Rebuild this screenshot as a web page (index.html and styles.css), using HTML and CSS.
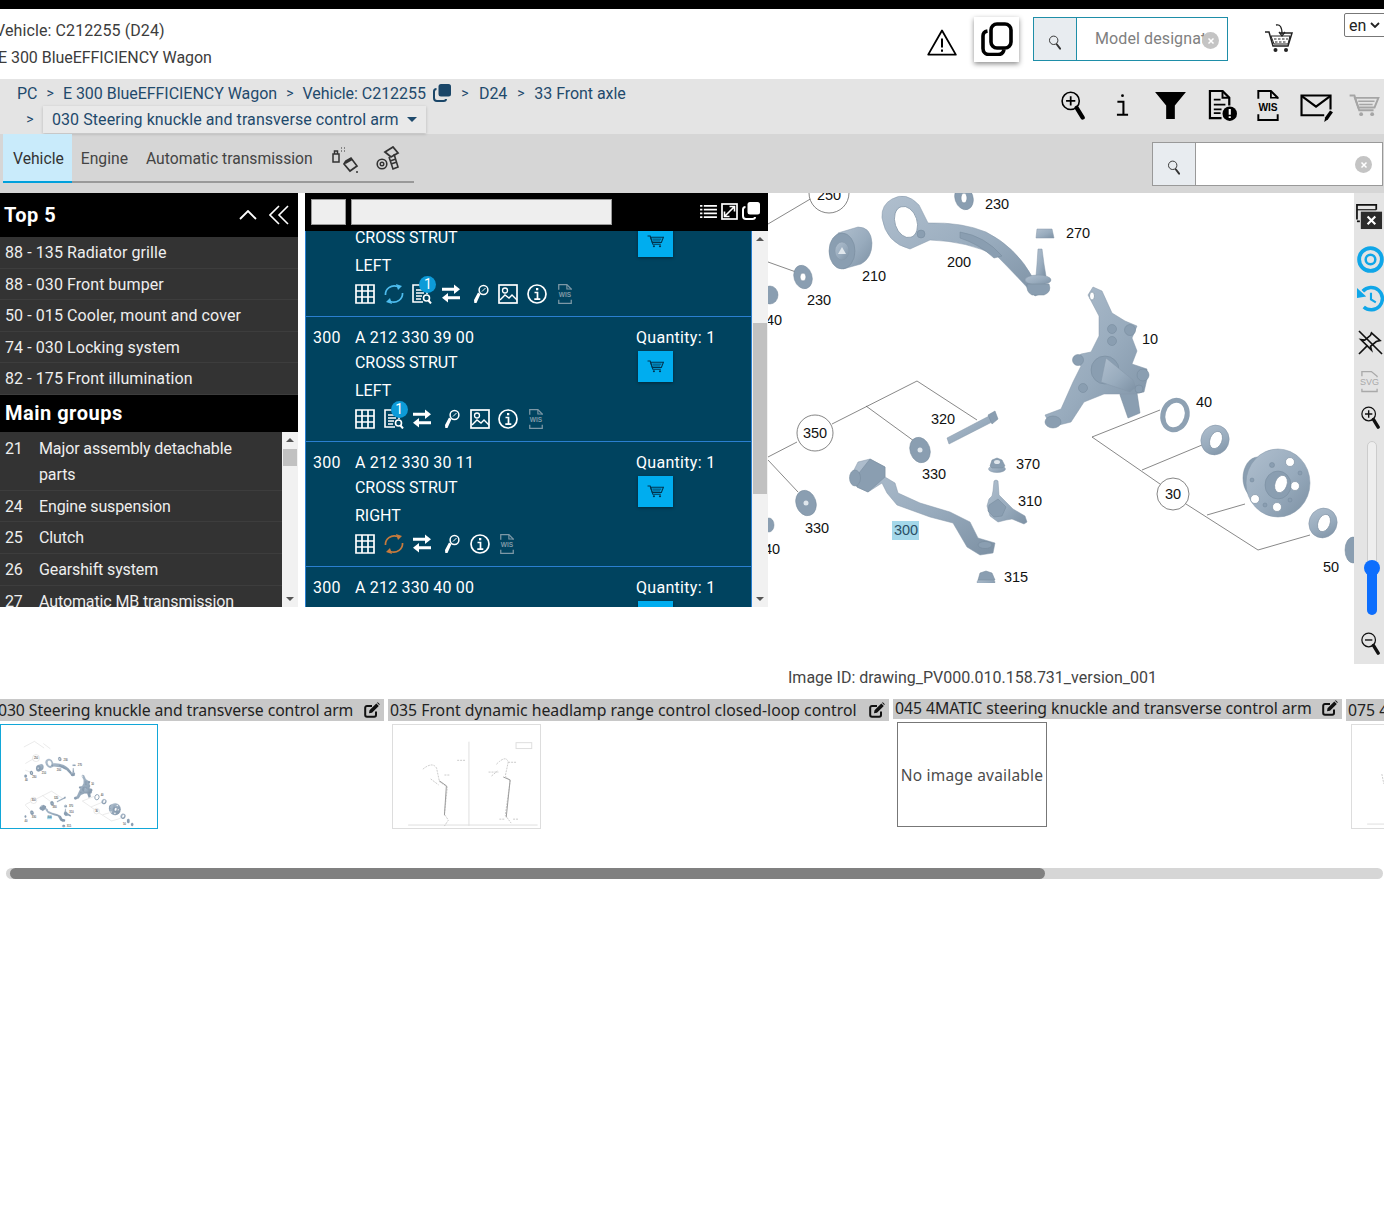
FILE: index.html
```html
<!DOCTYPE html>
<html lang="en">
<head>
<meta charset="utf-8">
<title>E 300 BlueEFFICIENCY Wagon - 030 Steering knuckle and transverse control arm</title>
<link rel="stylesheet" href="styles.css">
</head>
<body>
<svg class="defs" xmlns="http://www.w3.org/2000/svg">
  <symbol id="i-warning" viewBox="0 0 30 27"><path d="M15 1.500 28.800 25.600H1.200Z" fill="#fff" stroke="currentColor" stroke-width="1.800" stroke-linejoin="round"/><path d="M15 9.500v9" stroke="currentColor" stroke-width="2"/><path d="M15 20.500v2.200" stroke="currentColor" stroke-width="2"/></symbol>
  <symbol id="i-copy" viewBox="0 0 32 34"><rect x="10" y="2" width="20" height="24" rx="6" fill="none" stroke="currentColor" stroke-width="3.600"/><path d="M6.500 9C3.500 9.500 2 11 2 14v12.500C2 30 4.500 32.500 8 32.500h9c3.500 0 5.500-2 6-5" fill="none" stroke="currentColor" stroke-width="3.600"/></symbol>
  <symbol id="i-search" viewBox="0 0 16 18"><circle cx="6.500" cy="6.500" r="4.800" fill="none" stroke="currentColor" stroke-width="1.100"/><path d="m10 11 3.800 5" stroke="currentColor" stroke-width="2.200" stroke-linecap="round"/></symbol>
  <symbol id="i-basket" viewBox="0 0 30 30"><path d="M1 9h4l4 14h15l4-13H16" fill="none" stroke="currentColor" stroke-width="1.500"/><path d="M7 13h19l-2 8H10Z" fill="none" stroke="currentColor" stroke-width="1"/><path d="M10 16h14M11 19h12" stroke="currentColor" stroke-width="1.200" stroke-dasharray="2.500 1.500"/><path d="M12 2c4-1 6 2 6 9" fill="none" stroke="currentColor" stroke-width="1.300"/><path d="m15 9 3 4 3-4" fill="none" stroke="currentColor" stroke-width="1.300"/><circle cx="11.500" cy="27" r="2" fill="currentColor"/><circle cx="22" cy="27" r="2" fill="currentColor"/></symbol>
  <symbol id="i-zoomin" viewBox="0 0 26 32"><circle cx="10.500" cy="10.500" r="9.300" fill="none" stroke="currentColor" stroke-width="1.700"/><path d="M10.500 5.500v10M5.500 10.500h10" stroke="currentColor" stroke-width="1.900"/><path d="m17 18 6.500 10.500" stroke="currentColor" stroke-width="4.600" stroke-linecap="round"/></symbol>
  <symbol id="i-zoomout" viewBox="0 0 26 32"><circle cx="10.500" cy="10.500" r="9.300" fill="none" stroke="currentColor" stroke-width="1.700"/><path d="M5.500 10.500h10" stroke="currentColor" stroke-width="1.900"/><path d="m17 18 6.500 10.500" stroke="currentColor" stroke-width="4.600" stroke-linecap="round"/></symbol>
  <symbol id="i-info" viewBox="0 0 14 24"><rect x="5.500" y="0.500" width="3" height="3" rx="1.500" fill="currentColor"/><path d="M1.500 8.500H8v13M1 22.500h12" fill="none" stroke="currentColor" stroke-width="2.200"/></symbol>
  <symbol id="i-funnel" viewBox="0 0 32 28"><path d="M0 0h32L20.500 14v14h-9V14Z" fill="currentColor"/></symbol>
  <symbol id="i-docalert" viewBox="0 0 30 32"><path d="M14 29H2V1h13l7 7v8" fill="none" stroke="currentColor" stroke-width="2.300"/><path d="M15 1v7h7" fill="none" stroke="currentColor" stroke-width="2"/><path d="M6 10h7M6 15h12M6 20h8M6 24h7" stroke="currentColor" stroke-width="1.800"/><circle cx="22.500" cy="24.500" r="7.500" fill="currentColor"/><path d="M22.500 19.500v6M22.500 27v2" stroke="#fff" stroke-width="2.200"/></symbol>
  <symbol id="i-wis" viewBox="0 0 24 32"><path d="M2 9V1h13l7 7v1M2 25v6h20v-6" fill="none" stroke="currentColor" stroke-width="2"/><path d="M15 1v7h7" fill="none" stroke="currentColor" stroke-width="1.800"/><text class="wis-t" x="12" y="21.500">WIS</text></symbol>
  <symbol id="i-mail" viewBox="0 0 34 30"><path d="M25 22H1.500V1.500h30V16" fill="none" stroke="currentColor" stroke-width="2.200"/><path d="m1.500 2 15 11 15-11" fill="none" stroke="currentColor" stroke-width="2.200"/><path d="M25 29l1-5 5-7 3 2-5 7Z" fill="currentColor"/></symbol>
  <symbol id="i-cart" viewBox="0 0 32 24"><path d="M1 1.500h5l5 15.500h15" fill="none" stroke="currentColor" stroke-width="2"/><path d="M6.500 4h24.500l-4 10H10Z" fill="none" stroke="currentColor" stroke-width="2"/><path d="M10 7.500h17M11 11h14" stroke="currentColor" stroke-width="1.600"/><circle cx="13" cy="21" r="2" fill="currentColor"/><circle cx="24.500" cy="21" r="2" fill="currentColor"/></symbol>
  <symbol id="i-stack" viewBox="0 0 18 18"><rect x="5.500" y="0" width="12.500" height="12.500" rx="2.500" fill="currentColor"/><path d="M3.500 5C1.500 5 1 6 1 7.500V14c0 2 1 3 3 3h6.500c1.500 0 2.500-.5 2.500-2" fill="none" stroke="currentColor" stroke-width="2"/></symbol>
  <symbol id="i-bottle" viewBox="0 0 28 28"><path d="M2 8h6v8H2ZM3.500 8V5h3v3" fill="none" stroke="currentColor" stroke-width="1.500"/><path d="M10 2h1M13 2h1M10 5h1M13 5h1" stroke="currentColor" stroke-width="1.200"/><path d="m15 15 5-3 6 8-7 5-6-7Z" fill="none" stroke="currentColor" stroke-width="1.700"/><path d="m14 17 7-4" stroke="currentColor" stroke-width="2.500"/><circle cx="26" cy="26" r="1" fill="currentColor"/></symbol>
  <symbol id="i-bolt" viewBox="0 0 26 26"><path d="m9 6 8-5 5 6-7 4Z" fill="none" stroke="currentColor" stroke-width="1.800"/><path d="m13 11 4 12 5-2-4-13M14 15l6-2M15 18l6-2" fill="none" stroke="currentColor" stroke-width="1.600"/><circle cx="6" cy="18" r="4.800" fill="none" stroke="currentColor" stroke-width="1.600"/><circle cx="6" cy="18" r="1.800" fill="none" stroke="currentColor" stroke-width="1.400"/></symbol>
  <symbol id="i-list" viewBox="0 0 18 16"><path d="M0 2h2.500M0 6h2.500M0 10h2.500M0 14h2.500M4 2h14M4 6h14M4 10h14M4 14h14" stroke="currentColor" stroke-width="2"/></symbol>
  <symbol id="i-expand" viewBox="0 0 17 17"><rect x="1" y="1" width="15" height="15" fill="none" stroke="currentColor" stroke-width="1.700"/><path d="m4 13 9-9M8.500 3.500h5v5M3.500 8.500v5h5" fill="none" stroke="currentColor" stroke-width="1.600"/></symbol>
  <symbol id="i-grid" viewBox="0 0 20 20"><path d="M1 1h18v18H1ZM1 7h18M1 13h18M7 1v18M13 1v18" fill="none" stroke="currentColor" stroke-width="1.700"/></symbol>
  <symbol id="i-refresh" viewBox="0 0 20 20"><path d="M1.500 11C1 5 7 0 14 2.500" fill="none" stroke="currentColor" stroke-width="1.700"/><path d="M12 0l6 2-4 4Z" fill="currentColor"/><path d="M18.500 9c.5 6-5.500 11-12.500 8.500" fill="none" stroke="currentColor" stroke-width="1.700"/><path d="M8 20 2 18l4-4Z" fill="currentColor"/></symbol>
  <symbol id="i-docsearch" viewBox="0 0 20 20"><path d="M11 18H1V1h9l5 5v4" fill="none" stroke="currentColor" stroke-width="1.600"/><path d="M4 6h6M4 9h8M4 12h6M4 15h5" stroke="currentColor" stroke-width="1.300"/><circle cx="14.500" cy="14" r="3" fill="none" stroke="currentColor" stroke-width="1.600"/><path d="m16.500 16.500 2.500 3" stroke="currentColor" stroke-width="2"/></symbol>
  <symbol id="i-swap" viewBox="0 0 20 20"><path d="M1 3.800h12V.5l6 4.800-6 4.800V6.800H1Z" fill="currentColor"/><path d="M19 12.200H7V9L1 13.800l6 4.800v-3.400h12Z" fill="currentColor"/></symbol>
  <symbol id="i-key" viewBox="0 0 20 20"><circle cx="13.500" cy="6" r="4.400" fill="none" stroke="currentColor" stroke-width="1.500"/><path d="M15.500 4 12 7.500" stroke="currentColor" stroke-width="1"/><path d="M10.500 10 6.500 19H4.300L4 16l4-7.500Z" fill="currentColor"/></symbol>
  <symbol id="i-image" viewBox="0 0 20 20"><rect x="1" y="1" width="18" height="18" fill="none" stroke="currentColor" stroke-width="1.700"/><circle cx="7" cy="6.500" r="2.500" fill="none" stroke="currentColor" stroke-width="1.300"/><path d="m2 16 5-5 4 3 3-3 5 5" fill="none" stroke="currentColor" stroke-width="1.400"/></symbol>
  <symbol id="i-infoc" viewBox="0 0 20 20"><circle cx="10" cy="10" r="9" fill="none" stroke="currentColor" stroke-width="1.700"/><rect x="9" y="4" width="2.300" height="2.300" fill="currentColor"/><path d="M7.500 8.500h3v6.500M7.300 15.200h6" fill="none" stroke="currentColor" stroke-width="1.700"/></symbol>
  <symbol id="i-edit" viewBox="0 0 16 16"><path d="M12 9.500V13a1.800 1.800 0 0 1-1.800 1.800H3A1.800 1.800 0 0 1 1.200 13V5.800A1.800 1.800 0 0 1 3 4h5" fill="none" stroke="currentColor" stroke-width="2"/><path d="m5.500 8.200 6.800-6.800 2.500 2.500L8 10.700l-3 .5ZM13 .8l.8-.6 2 2-.6.800Z" fill="currentColor"/></symbol>
  <symbol id="i-winx" viewBox="0 0 28 28"><path d="M1 17V2h20v5" fill="none" stroke="currentColor" stroke-width="1.800"/><path d="M1 7h20" stroke="currentColor" stroke-width="1.200"/><path d="M4 19H1" stroke="currentColor" stroke-width="1.800"/><rect x="5" y="9" width="22" height="18" fill="#2b2b2b"/><path d="m12 14 8 8M20 14l-8 8" stroke="#fff" stroke-width="2.200"/></symbol>
  <symbol id="i-target" viewBox="0 0 28 28"><circle cx="14" cy="14" r="11.800" fill="none" stroke="currentColor" stroke-width="4"/><circle cx="14" cy="14" r="5" fill="none" stroke="currentColor" stroke-width="2.600"/></symbol>
  <symbol id="i-history" viewBox="0 0 28 28"><path d="M6 6.500A11.600 11.600 0 1 1 7 22.800" fill="none" stroke="currentColor" stroke-width="3.600"/><path d="M0 3 9.500 12 0 13.500Z" fill="currentColor"/><path d="M14.500 8v7l5 3" fill="none" stroke="currentColor" stroke-width="2.200"/></symbol>
  <symbol id="i-pinoff" viewBox="0 0 26 26"><path d="m1 1 24 24M1 25l9-9" stroke="currentColor" stroke-width="1.700"/><path d="m14 3 9 8-4 1-6 5 1 4-11-11 4 .5 6-5Z" fill="none" stroke="currentColor" stroke-width="1.700"/></symbol>
  <symbol id="i-svgdoc" viewBox="0 0 20 24"><path d="M2 6V1h10l6 5v1M2 19v3h16v-3" fill="none" stroke="currentColor" stroke-width="1.400"/></symbol>
  <symbol id="i-x" viewBox="0 0 10 10"><path d="m2.500 2.500 5 5M7.500 2.500l-5 5" stroke="currentColor" stroke-width="1.500"/></symbol>
  <symbol id="i-chev" viewBox="0 0 10 6"><path d="m1 1 4 4 4-4" fill="none" stroke="currentColor" stroke-width="1.800"/></symbol>
</svg>

<div class="blackbar"></div>

<header class="head">
  <div class="vehicle">
    <div>Vehicle: C212255 (D24)</div>
    <div class="model">E 300 BlueEFFICIENCY Wagon</div>
  </div>
  <div class="head-tools">
    <svg class="ic-warning"><use href="#i-warning"/></svg>
    <div class="copybox"><svg class="ic-copy"><use href="#i-copy"/></svg></div>
    <div class="searchbox teal">
      <div class="search-btn"><svg class="ic-search"><use href="#i-search"/></svg></div>
      <div class="search-field">
        <span class="placeholder">Model designat</span>
        <span class="clear over"><svg class="ic-x"><use href="#i-x"/></svg></span>
      </div>
    </div>
    <svg class="ic-basket"><use href="#i-basket"/></svg>
    <div class="lang">en<svg class="ic-chev"><use href="#i-chev"/></svg></div>
  </div>
</header>

<nav class="crumbbar">
  <div class="crumbs">
    <div class="crumb-line">
      <span>PC</span><i>&gt;</i><span>E 300 BlueEFFICIENCY Wagon</span><i>&gt;</i><span>Vehicle: C212255</span><svg class="ic-stack"><use href="#i-stack"/></svg><i class="after-ic">&gt;</i><span>D24</span><i class="last">&gt;</i><span>33 Front axle</span>
    </div>
    <div class="crumb-line second">
      <i>&gt;</i>
      <div class="crumb-drop">030 Steering knuckle and transverse control arm<b class="caret"></b></div>
    </div>
  </div>
  <div class="crumb-tools">
    <svg class="t-zoom"><use href="#i-zoomin"/></svg>
    <svg class="t-info"><use href="#i-info"/></svg>
    <svg class="t-funnel"><use href="#i-funnel"/></svg>
    <svg class="t-doc"><use href="#i-docalert"/></svg>
    <svg class="t-wis"><use href="#i-wis"/></svg>
    <svg class="t-mail"><use href="#i-mail"/></svg>
    <svg class="t-cart"><use href="#i-cart"/></svg>
  </div>
</nav>

<div class="tabbar">
  <div class="tabs">
    <div class="tab active">Vehicle</div>
    <div class="tab">Engine</div>
    <div class="tab">Automatic transmission</div>
    <svg class="tab-ic"><use href="#i-bottle"/></svg>
    <svg class="tab-ic second"><use href="#i-bolt"/></svg>
  </div>
  <div class="searchbox grey">
    <div class="search-btn"><svg class="ic-search"><use href="#i-search"/></svg></div>
    <div class="search-field">
      <span class="clear"><svg class="ic-x"><use href="#i-x"/></svg></span>
    </div>
  </div>
</div>

<main class="work">
  <aside class="nav-panel">
    <div class="panel-head top5">
      <h2>Top 5</h2>
      <svg class="ph-up" viewBox="0 0 18 10"><path d="m1 9 8-8 8 8" fill="none" stroke="currentColor" stroke-width="1.800"/></svg>
      <svg class="ph-dbl" viewBox="0 0 20 20"><path d="M10 1 1 10l9 9M19 1l-9 9 9 9" fill="none" stroke="currentColor" stroke-width="1.600"/></svg>
    </div>
    <ul class="top-list">
      <li>88 - 135 Radiator grille</li>
      <li>88 - 030 Front bumper</li>
      <li>50 - 015 Cooler, mount and cover</li>
      <li>74 - 030 Locking system</li>
      <li>82 - 175 Front illumination</li>
    </ul>
    <div class="panel-head groups"><h2>Main groups</h2></div>
    <div class="group-wrap">
      <ul class="group-list">
        <li><span>21</span><span>Major assembly detachable parts</span></li>
        <li><span>24</span><span>Engine suspension</span></li>
        <li><span>25</span><span>Clutch</span></li>
        <li><span>26</span><span>Gearshift system</span></li>
        <li><span>27</span><span>Automatic MB transmission</span></li>
      </ul>
      <div class="vscroll"><b class="up"></b><div class="track"><div class="thumb t-left"></div></div><b class="down"></b></div>
    </div>
  </aside>

  <section class="parts-panel">
    <div class="parts-head">
      <div class="fake-input small"></div>
      <div class="fake-input wide"></div>
      <div class="parts-head-ic">
        <svg class="ph-list"><use href="#i-list"/></svg>
        <svg class="ph-exp"><use href="#i-expand"/></svg>
        <svg class="ph-stack"><use href="#i-stack"/></svg>
      </div>
    </div>
    <div class="parts-body">
      <div class="parts-list">
        <article class="part first">
          <div class="num"></div>
          <div class="desc">
            <div>&nbsp;</div><div>CROSS STRUT</div><div>LEFT</div>
            <div class="part-ic">
              <svg><use href="#i-grid"/></svg>
              <svg class="blue"><use href="#i-refresh"/></svg>
              <span class="doc"><svg><use href="#i-docsearch"/></svg><em>1</em></span>
              <svg><use href="#i-swap"/></svg>
              <svg><use href="#i-key"/></svg>
              <svg><use href="#i-image"/></svg>
              <svg><use href="#i-infoc"/></svg>
              <svg class="dim"><use href="#i-wis"/></svg>
            </div>
          </div>
          <div class="qty"><div>&nbsp;</div><div class="buy"><svg><use href="#i-cart"/></svg></div></div>
        </article>
        <article class="part">
          <div class="num">300</div>
          <div class="desc">
            <div>A 212 330 39 00</div><div>CROSS STRUT</div><div>LEFT</div>
            <div class="part-ic">
              <svg><use href="#i-grid"/></svg>
              <span class="doc"><svg><use href="#i-docsearch"/></svg><em>1</em></span>
              <svg><use href="#i-swap"/></svg>
              <svg><use href="#i-key"/></svg>
              <svg><use href="#i-image"/></svg>
              <svg><use href="#i-infoc"/></svg>
              <svg class="dim"><use href="#i-wis"/></svg>
            </div>
          </div>
          <div class="qty"><div>Quantity: 1</div><div class="buy"><svg><use href="#i-cart"/></svg></div></div>
        </article>
        <article class="part">
          <div class="num">300</div>
          <div class="desc">
            <div>A 212 330 30 11</div><div>CROSS STRUT</div><div>RIGHT</div>
            <div class="part-ic">
              <svg><use href="#i-grid"/></svg>
              <svg class="orange"><use href="#i-refresh"/></svg>
              <svg><use href="#i-swap"/></svg>
              <svg><use href="#i-key"/></svg>
              <svg><use href="#i-infoc"/></svg>
              <svg class="dim"><use href="#i-wis"/></svg>
            </div>
          </div>
          <div class="qty"><div>Quantity: 1</div><div class="buy"><svg><use href="#i-cart"/></svg></div></div>
        </article>
        <article class="part">
          <div class="num">300</div>
          <div class="desc"><div>A 212 330 40 00</div></div>
          <div class="qty"><div>Quantity: 1</div><div class="buy"><svg><use href="#i-cart"/></svg></div></div>
        </article>
      </div>
      <div class="vscroll"><b class="up"></b><div class="track"><div class="thumb t-parts"></div></div><b class="down"></b></div>
    </div>
  </section>

  <section class="viewer">
    <div class="canvas">
      <svg class="drawing" viewBox="768 193 586 390" xmlns="http://www.w3.org/2000/svg">
        <defs>
          <linearGradient id="metal" x1="0" y1="0" x2="1" y2="1">
            <stop offset="0" stop-color="#b0bfce"/><stop offset=".55" stop-color="#98abbd"/><stop offset="1" stop-color="#7c90a3"/>
          </linearGradient>
          <g id="art">
            <g class="leaders">
              <path d="M768 224 812 198M768 262l28 10"/>
              <path d="M768 457l29-15M832 424l85-43 60 39M866 406l48 35M768 460l30 32"/>
              <path d="M1160 410l-68 27 68 47M1142 470l60-25M1186 504l72 46 52-15M1207 515l38-11"/>
              <path d="M760 130l60-32 55 38M870 110l40 30"/>
            </g>
            <circle class="callout" cx="829" cy="193" r="20"/>
            <circle class="callout" cx="815" cy="433" r="18"/>
            <circle class="callout" cx="1173" cy="494" r="16"/>

            <g class="part-art">
              <!-- upper control arm 200 -->
              <path d="M892 199q14-8 27 6l9 18q34-1 58 9 30 15 47 46l15 13-13 5q-20-22-38-40-30-15-67-16l-20 9q-24-6-28-31-1-13 10-19Z"/>
              <ellipse class="hole" cx="906" cy="222" rx="11" ry="16" transform="rotate(-18 906 222)"/>
              <circle class="shade" cx="921" cy="234" r="4"/>
              <path class="shade" d="M960 232q25 4 42 24l-8 2q-15-14-34-20Z"/>
              <path d="M1037 264l1-15 4 0 2 15 2 12h-10Z"/>
              <ellipse cx="1038" cy="280" rx="13" ry="5"/>
              <path class="shade" d="M1027 284h22q3 8-5 11h-12q-6-3-5-11Z"/>
              <path d="M1037 229l15 0 2 9-18 0Z"/>
              <!-- bush 210 -->
              <path d="M838 233 858 227q13 0 14 16 0 15-11 21l-18 5Z"/>
              <ellipse cx="842" cy="251" rx="13" ry="18" class="shade"/>
              <ellipse cx="842" cy="251" rx="7" ry="9"/>
              <path class="hole-dark" d="M842 247l4 7h-8Z"/>
              <!-- washers -->
              <ellipse cx="803" cy="277" rx="9" ry="12" transform="rotate(-18 803 277)" class="shade"/>
              <ellipse class="hole" cx="803" cy="277" rx="3" ry="4"/>
              <ellipse cx="964" cy="198" rx="9" ry="12" transform="rotate(-18 964 198)" class="shade"/>
              <ellipse class="hole" cx="964" cy="198" rx="3" ry="5"/>
              <ellipse cx="770" cy="295" rx="8" ry="9" class="shade"/>
              <!-- knuckle 10 -->
              <path class="shade" d="M1120 392l20-2-3 3 3 20-12 5-8-23Z"/>
              <path d="M1088 295l5-8 9 4 10 22 13 8 12 5-5 12 5 13-5 13 15 5v10l-3 13-10 2-13 0h-17l-20 8-13 20-20 5-6-12 16-6 12-27 8-16-7-7 7-5 10-2 8-16v-20Z"/>
              <ellipse class="hole" cx="1092" cy="296" rx="2.500" ry="4"/>
              <circle class="shade" cx="1112" cy="329" r="4.500"/><circle class="shade" cx="1112" cy="341" r="4.500"/>
              <circle class="shade" cx="1130" cy="330" r="5.500"/><circle class="shade" cx="1143" cy="375" r="6"/>
              <circle class="shade" cx="1083" cy="388" r="4.500"/><circle class="shade" cx="1078" cy="360" r="5.500"/>
              <circle class="shade" cx="1105" cy="370" r="14"/>
              <path d="M1106 358l27 22 3 7-6 5-29-10Z"/>
              <circle class="shade" cx="1139" cy="389" r="4"/>
              <ellipse class="shade" cx="1053" cy="422" rx="8" ry="6"/>
              <!-- ring 40 -->
              <ellipse class="ring" cx="1175" cy="415" rx="12" ry="15" transform="rotate(16 1175 415)"/>
              <!-- bearing -->
              <ellipse cx="1215" cy="440" rx="14" ry="15" transform="rotate(22 1215 440)"/>
              <ellipse class="hole" cx="1216" cy="440" rx="6" ry="9" transform="rotate(22 1216 440)"/>
              <ellipse cx="1323" cy="523" rx="14" ry="15" transform="rotate(22 1323 523)"/>
              <ellipse class="hole" cx="1324" cy="523" rx="6" ry="9" transform="rotate(22 1324 523)"/>
              <!-- hub -->
              <ellipse class="shade" cx="1258" cy="478" rx="15" ry="21"/>
              <ellipse cx="1278" cy="483" rx="32" ry="34"/>
              <circle class="hole" cx="1290" cy="462" r="4.500"/><circle class="hole" cx="1295" cy="486" r="4.500"/>
              <circle class="hole" cx="1255" cy="499" r="4.500"/><circle class="hole" cx="1277" cy="507" r="4.500"/>
              <circle class="shade" cx="1272" cy="465" r="2.500"/><circle class="shade" cx="1300" cy="473" r="2"/><circle class="shade" cx="1252" cy="480" r="2"/><circle class="shade" cx="1265" cy="505" r="2"/><circle class="shade" cx="1290" cy="500" r="2"/>
              <ellipse class="shade" cx="1278" cy="485" rx="13" ry="14"/>
              <ellipse class="hole" cx="1281" cy="484" rx="6" ry="9" transform="rotate(20 1281 484)"/>
              <ellipse class="shade" cx="1353" cy="550" rx="8" ry="13"/>
              <ellipse class="shade" cx="1375" cy="570" rx="7" ry="10"/><ellipse class="shade" cx="1410" cy="600" rx="9" ry="10"/>
              <!-- bolt 320 -->
              <path d="M947 438l44-23 3 6-45 23Z"/>
              <path class="shade" d="M988 415l7-4 3 8-6 5Z"/>
              <!-- washers lower -->
              <ellipse cx="920" cy="450" rx="10" ry="13" transform="rotate(-18 920 450)" class="shade"/>
              <circle class="hole-dark" cx="920" cy="450" r="2.500"/>
              <ellipse cx="806" cy="503" rx="10" ry="13" transform="rotate(-18 806 503)" class="shade"/>
              <circle class="hole-dark" cx="806" cy="503" r="2.500"/>
              <ellipse class="shade" cx="769" cy="525" rx="5" ry="7"/>
              <!-- nut 370 -->
              <ellipse cx="997" cy="469" rx="8.500" ry="3.500"/>
              <path class="shade" d="M990 466l2-6 5-2 5 2 3 6-3 2h-10Z"/>
              <ellipse class="hole-dark" cx="997" cy="462" rx="3" ry="2"/>
              <!-- ball joint 310 -->
              <path d="M994 481q2-2 4 0l1 14 8 8 6 6 12 7 2 6-3 2-12-5-6 1-8 2-8-6-3-10 2-7 3-3 1-5Z"/>
              <path class="shade" d="M989 505l9-6 8 8-4 9-8 1-6-6Z"/>
              <!-- lower arm 300 -->
              <path d="M850 478l8-16 12-3 15 8v10l10 6 3 10 22 10 30 9 20 10 8 16 17 5-2 10-13 2-13-8-14-24-23-6-33-12-10-12-5-10-14 9-11-5Z"/>
              <path class="shade" d="M870 459l15 8v10l-17 15-11-5 2-14Z"/>
              <ellipse cx="855" cy="478" rx="5.500" ry="8" class="shade"/>
              <ellipse class="shade" cx="985" cy="545" rx="7" ry="3.500"/>
              <!-- nut 315 -->
              <ellipse cx="986" cy="582" rx="9" ry="4"/>
              <path class="shade" d="M978 580l2-7 6-2 6 2 3 7Z"/>
            </g>
            <rect class="hl" x="892" y="521" width="27" height="19"/>
            <g class="labels">
              <text x="829" y="200">250</text><text x="997" y="209">230</text><text x="1078" y="238">270</text>
              <text x="959" y="267">200</text><text x="874" y="281">210</text><text x="819" y="305">230</text>
              <text x="774" y="325">40</text><text x="1150" y="344">10</text><text x="1204" y="407">40</text>
              <text x="943" y="424">320</text><text x="815" y="438">350</text><text x="934" y="479">330</text>
              <text x="1028" y="469">370</text><text x="1030" y="506">310</text><text x="817" y="533">330</text>
              <text x="906" y="535" class="hl-t">300</text><text x="1173" y="499">30</text><text x="772" y="554">40</text>
              <text x="1016" y="582">315</text><text x="1331" y="572">50</text>
            </g>
          </g>
        </defs>
        <use href="#art"/>
      </svg>
    </div>
    <div class="side-tools">
      <svg class="s-win"><use href="#i-winx"/></svg>
      <svg class="s-target"><use href="#i-target"/></svg>
      <svg class="s-history"><use href="#i-history"/></svg>
      <svg class="s-pin"><use href="#i-pinoff"/></svg>
      <div class="s-svg"><svg><use href="#i-svgdoc"/></svg><span>SVG</span></div>
      <svg class="s-zoom"><use href="#i-zoomin"/></svg>
      <div class="slider"><div class="slider-fill"></div><div class="slider-thumb"></div></div>
      <svg class="s-zoom out"><use href="#i-zoomout"/></svg>
    </div>
  </section>
</main>

<div class="image-id">Image ID: drawing_PV000.010.158.731_version_001</div>

<section class="strip">
  <figure class="sheet s1">
    <figcaption>030 Steering knuckle and transverse control arm<svg><use href="#i-edit"/></svg></figcaption>
    <div class="thumb-img selected">
      <svg class="mini" viewBox="633 5 880 585"><use href="#art"/></svg>
    </div>
  </figure>
  <figure class="sheet s2">
    <figcaption>035 Front dynamic headlamp range control closed-loop control<svg><use href="#i-edit"/></svg></figcaption>
    <div class="thumb-img faint">
      <svg class="mini" viewBox="0 0 149 105">
        <path class="sk-frame" d="M77 17V103M15 102h132"/>
        <rect class="sk-frame" x="125" y="18" width="16" height="6"/>
        <path class="sk" d="M30 45q10-8 14-1l3 14 8 5-3 28 4 6-4 6M38 55l8 6M65 36h9M52 51h6"/>
        <path class="sk" d="M105 40q10-10 12-2l-3 14 5 5-5 35 6 8M100 52l6-5M97 48h10M117 38h8M108 96h6M122 96h6"/>
        <path class="sk dark" d="M47 57l7 5-2 30M112 53l7 3-4 38"/>
      </svg>
    </div>
  </figure>
  <figure class="sheet s3">
    <figcaption>045 4MATIC steering knuckle and transverse control arm<svg><use href="#i-edit"/></svg></figcaption>
    <div class="thumb-img none">No image available</div>
  </figure>
  <figure class="sheet s4">
    <figcaption>075 4MATIC front axle</figcaption>
    <div class="thumb-img faint">
      <svg class="mini" viewBox="0 0 149 105"><path class="sk-frame" d="M15 101h132"/><path class="sk" d="M30 50l2 10"/></svg>
    </div>
  </figure>
</section>

<div class="hscroll"><div class="hthumb"></div></div>
</body>
</html>
```
FILE: styles.css
```css
* { box-sizing: border-box; }
html, body { margin: 0; padding: 0; }
body {
  width: 1384px;
  overflow-x: hidden;
  background: #fff;
  font-family: Roboto, "Liberation Sans", sans-serif;
  font-size: 16px;
  color: #333;
}
.defs { display: none; }
svg { display: block; flex: none; }
ul { list-style: none; margin: 0; padding: 0; }
h2 { margin: 0; font-size: 20px; font-weight: 700; color: #fff; font-family: Roboto, sans-serif; letter-spacing: .5px; }
.wis-t { font-family: "Liberation Sans", sans-serif; font-size: 10.500px; font-weight: 700; fill: currentColor; text-anchor: middle; }

.blackbar { height: 9px; background: #000; }

/* header */
.head { height: 70px; display: flex; justify-content: space-between; overflow: hidden; }
.vehicle { margin-left: -5px; padding-top: 8px; line-height: 27px; color: #3c3c3c; letter-spacing: .1px; }
.vehicle .model { padding-left: 3px; letter-spacing: -.05px; }
.head-tools { display: flex; align-items: flex-start; }
.ic-warning { width: 30px; height: 27px; margin-top: 20px; color: #000; }
.copybox { width: 45px; height: 45px; margin: 8px 0 0 17px; background: #fff; box-shadow: 0 2px 5px rgba(0,0,0,.45); display: flex; align-items: center; justify-content: center; color: #000; }
.ic-copy { width: 32px; height: 34px; margin-top: -2px; }
.searchbox { display: flex; height: 44px; background: #fff; border: 1px solid #999; }
.searchbox.teal { width: 195px; margin: 8px 0 0 14px; border-color: #1e8ea8; }
.searchbox.grey { width: 231px; margin-right: 1px; margin-top: 8px; }
.search-btn { width: 43px; flex: none; background: #e8ecf0; border-right: 1px solid #999; display: flex; align-items: center; justify-content: center; color: #333; padding-top: 6px; }
.teal .search-btn { border-right-color: #1e8ea8; }
.ic-search { width: 14px; height: 17px; }
.search-field { flex: 1; position: relative; display: flex; align-items: center; padding-left: 18px; overflow: hidden; }
.placeholder { color: #808080; white-space: nowrap; letter-spacing: .1px; margin-top: -2px; }
.clear { width: 17px; height: 17px; border-radius: 50%; background: #c4c4c4; color: #fff; position: absolute; right: 10px; top: 13px; display: flex; align-items: center; justify-content: center; }
.clear.over { right: 8px; top: 14px; }
.ic-x { width: 10px; height: 10px; }
.ic-basket { width: 30px; height: 30px; margin: 14px 0 0 36px; color: #222; }
.lang { width: 42px; height: 24px; margin: 4px -2px 0 50px; border: 1px solid #777; border-radius: 2px; padding-left: 4px; display: flex; align-items: center; gap: 4px; color: #222; }
.ic-chev { width: 10px; height: 6px; }

/* breadcrumb */
.crumbbar { height: 55px; background: #e4e4e4; display: flex; justify-content: space-between; }
.crumbs { padding: 1px 0 0 17px; color: #1f4a6c; }
.crumb-line { display: flex; align-items: center; height: 26px; }
.crumb-line span { white-space: nowrap; letter-spacing: -.04px; }
.crumb-line i { font-style: normal; font-size: 14px; width: 25.500px; text-align: center; }
.crumb-line i:first-of-type { width: 25.500px; }
.ic-stack { width: 18px; height: 18px; margin-left: 7px; color: #1a4668; }
.crumb-line i.after-ic { width: 28px; }
.crumb-line i.last { width: 27px; }
.crumb-line.second i { width: 26px; }
.crumb-drop { width: 383px; height: 27px; background: #e9e9e9; box-shadow: 0 1px 3px rgba(0,0,0,.2); padding-left: 9px; display: flex; align-items: center; justify-content: space-between; letter-spacing: .07px; white-space: nowrap; }
.caret { width: 0; height: 0; border: 5px solid transparent; border-top: 5px solid #1f4a6c; border-bottom: 0; margin-right: 9px; }
.crumb-tools { display: flex; align-items: center; padding: 0 4px 3px 0; color: #000; }
.t-zoom { width: 24px; height: 30px; margin-top: 2px; }
.t-info { width: 13px; height: 24px; margin-left: 31px; }
.t-funnel { width: 31px; height: 27px; margin-left: 26px; }
.t-doc { width: 29px; height: 31px; margin-left: 22px; }
.t-wis { width: 24px; height: 31px; margin-left: 19px; }
.t-mail { width: 33px; height: 29px; margin: 6px 0 0 20px; }
.t-cart { width: 32px; height: 23px; margin-left: 15px; color: #a5a5a5; }

/* tabs */
.tabbar { height: 59px; background: #d6d6d6; display: flex; justify-content: space-between; }
.tabs { margin-left: 3px; width: 411px; height: 49px; display: flex; align-items: stretch; border-bottom: 2px solid #999; }
.tab { padding: 0 9px; line-height: 49px; font-size: 15.700px; color: #444; white-space: nowrap; }
.tab.active { background: #c9ebfb; color: #333; margin-bottom: -2px; border-bottom: 2px solid #00a0dc; padding: 0 8px 0 10px; }
.tab-ic { width: 28px; height: 28px; margin: 12px 0 0 9px; color: #333; }
.tab-ic.second { width: 26px; height: 26px; margin-left: 17px; }

/* main */
.work { display: flex; align-items: flex-start; height: 471px; }
.nav-panel { width: 298px; height: 414px; background: #333; color: #eee; overflow: hidden; }
.panel-head { background: #000; display: flex; align-items: center; padding-left: 4px; }
.top5 { height: 44px; color: #fff; }
.top5 h2 { flex: 1; }
.groups { height: 37px; padding-left: 5px; }
.ph-up { width: 18px; height: 10px; }
.ph-dbl { width: 20px; height: 20px; margin: 0 9px 0 12px; }
.top-list li { height: 31.600px; line-height: 32px; padding-left: 5px; border-bottom: 1px solid #3d3d3d; white-space: nowrap; letter-spacing: .08px; }
.group-wrap { display: flex; height: 175px; overflow: hidden; }
.group-list { flex: 1; overflow: hidden; letter-spacing: -.12px; }
.group-list li { display: flex; padding: 3px 0 2px 5px; line-height: 26px; border-bottom: 1px solid #3d3d3d; }
.group-list li:first-child { padding-top: 4px; padding-bottom: 2px; }
.group-list li:nth-child(2) { padding-bottom: 1px; }
.group-list li span:first-child { width: 34px; flex: none; }
.group-list li:first-child span:last-child { width: 215px; }

.vscroll { width: 16px; flex: none; background: #f1f1f1; display: flex; flex-direction: column; align-items: center; }
.up, .down { display: block; height: 16px; width: 100%; position: relative; }
.up::after, .down::after { content: ""; position: absolute; left: 4px; top: 6px; border: 4px solid transparent; }
.up::after { border-bottom: 4px solid #555; border-top: 0; }
.down::after { border-top: 4px solid #555; border-bottom: 0; }
.track { flex: 1; width: 100%; }
.thumb { background: #c1c1c1; margin: 0 1px; }
.t-left { height: 17px; margin-top: 1px; }
.t-parts { height: 171px; margin-top: 76px; }

.parts-panel { width: 463px; height: 414px; margin-left: 7px; display: flex; flex-direction: column; }
.parts-head { height: 38px; background: #000; display: flex; align-items: flex-start; padding: 6px 0 0 6px; }
.fake-input { height: 26px; background: #eee; border: 1px solid #999; }
.fake-input.small { width: 35px; }
.fake-input.wide { width: 261px; margin-left: 5px; }
.parts-head-ic { margin-left: auto; display: flex; align-items: center; gap: 4px; color: #fff; padding: 3px 8px 0 0; }
.ph-list { width: 17px; height: 15px; }
.ph-exp { width: 17px; height: 17px; }
.ph-stack { width: 18px; height: 18px; }
.parts-body { flex: 1; display: flex; overflow: hidden; min-height: 0; }
.parts-list { flex: 1; background: #00435f; color: #fff; border-left: 1px solid #2a7fd0; border-right: 1px solid #2a7fd0; overflow: hidden; }
.part { height: 125px; display: flex; padding: 8px 0 0 7px; border-bottom: 1px solid #2a7fd0; overflow: hidden; }
.part.first { margin-top: -39px; }
.num { width: 42px; flex: none; line-height: 26px; letter-spacing: .2px; }
.desc { flex: 1; white-space: nowrap; }
.desc > div:nth-child(1) { line-height: 26px; letter-spacing: .2px; }
.desc > div:nth-child(2) { line-height: 24px; letter-spacing: -.05px; }
.desc > div:nth-child(3) { line-height: 31px; }
.qty { width: 115px; flex: none; line-height: 26px; letter-spacing: .3px; }
.buy { width: 35px; height: 31px; margin: 0 0 0 2px; background: #00adef; box-shadow: 0 1px 3px rgba(0,0,0,.4); color: #00334d; display: flex; align-items: center; justify-content: center; }
.buy svg { width: 17px; height: 13px; }
.desc > .part-ic { display: flex; gap: 8.700px; margin-top: 2.500px; align-items: center; color: #fff; }
.part-ic svg { width: 20px; height: 20px; }
.part-ic .blue { color: #4dbcee; }
.part-ic .orange { color: #c77b3d; }
.part-ic .dim { color: #7d98a6; width: 18px; }
.doc { position: relative; display: block; width: 20px; height: 20px; }
.doc em { position: absolute; left: 7px; top: -8px; width: 17px; height: 17px; border-radius: 50%; background: #0d9bd8; color: #fff; font-style: normal; font-size: 14px; line-height: 17px; text-align: center; }

/* viewer */
.viewer { flex: 1; height: 471px; display: flex; min-width: 0; }
.canvas { width: 586px; height: 390px; overflow: hidden; }
.drawing { width: 586px; height: 390px; }
.leaders path { fill: none; stroke: #555; stroke-width: .7; }
.callout { fill: #fff; stroke: #666; stroke-width: .8; }
.part-art > * { fill: url(#metal); stroke: #8597a8; stroke-width: .5; }
.part-art .shade { fill: #8a9eb1; stroke: #75889a; }
.part-art .hole { fill: #fff; stroke: #7f92a4; stroke-width: .7; }
.part-art .hole-dark { fill: #dfe6ec; stroke: none; }
.part-art .ring { fill: #fff; stroke: #8ea1b3; stroke-width: 5; }
.hl { fill: #a4d8ea; }
.labels text { font-family: "Liberation Sans", Arial, sans-serif; font-size: 14.500px; fill: #111; text-anchor: middle; }
.labels .hl-t { fill: #2a4f66; }

.side-tools { width: 30px; height: 471px; background: #e4e4e4; display: flex; flex-direction: column; align-items: flex-start; padding: 10px 0 0 2px; overflow: hidden; color: #111; }
.s-win { width: 27px; height: 27px; }
.s-target { width: 27px; height: 27px; margin: 16px 0 0 1px; color: #0fa6e8; }
.s-history { width: 27px; height: 27px; margin: 12px 0 0 1px; color: #0fa6e8; }
.s-pin { width: 25px; height: 25px; margin: 18px 0 0 2px; }
.s-svg { width: 19px; height: 24px; margin: 15px 0 0 4px; position: relative; color: #a9a9a9; flex: none; }
.s-svg svg { width: 19px; height: 24px; }
.s-svg span { position: absolute; left: 0; top: 7px; font-size: 9px; line-height: 10px; width: 19px; text-align: center; font-family: "Liberation Sans", sans-serif; }
.s-zoom { width: 19px; height: 24px; margin: 12px 0 0 5px; }
.s-zoom.out { margin-top: 17px; }
.slider { width: 10px; height: 174px; margin: 11px 0 0 11px; flex: none; background: #eee; border: 1px solid #ccc; border-radius: 5px; position: relative; display: flex; flex-direction: column; justify-content: flex-end; }
.slider-fill { height: 47px; margin: 0 -1px -1px; background: #0d6efd; border-radius: 0 0 5px 5px; }
.slider-thumb { position: absolute; left: -4px; top: 118px; width: 16px; height: 16px; border-radius: 50%; background: #0d6efd; }

.image-id { height: 35px; padding-left: 788px; line-height: 27px; color: #444; white-space: nowrap; }

/* sheets strip */
.strip { display: flex; align-items: flex-start; gap: 4px; margin-left: -4px; height: 169px; width: 1388px; overflow: hidden; font-family: "Noto Sans", sans-serif; }
.sheet { margin: 0; flex: none; }
.sheet figcaption { height: 22px; background: #c8c8c8; color: #222; font-size: 15.800px; display: flex; align-items: center; justify-content: space-between; padding: 0 4px 0 2px; line-height: 22px; white-space: nowrap; }
.sheet figcaption svg { width: 16px; height: 16px; color: #111; }
.s1 { width: 388px; }
.s1 figcaption { letter-spacing: -.1px; }
.s2 { width: 501px; }
.s3 { width: 449px; margin-top: -2px; }
.s3 figcaption { letter-spacing: -.05px; }
.s4 { width: 200px; }
.thumb-img { margin: 3px 0 0 4px; width: 149px; height: 105px; }
.thumb-img.selected { width: 158px; border: 1px solid #12a7d8; overflow: hidden; }
.faint { border: 1px solid #ddd; }
.s4 .faint { margin-left: 5px; }
.mini { width: 100%; height: 100%; }
.sk { fill: none; stroke: #bdbdbd; stroke-width: .8; stroke-dasharray: 2 1; }
.sk.dark { stroke: #9a9a9a; stroke-width: 1; stroke-dasharray: none; }
.sk-frame { fill: none; stroke: #dedede; stroke-width: 1; }
.none { width: 150px; border: 1px solid #777; display: flex; align-items: center; justify-content: center; font-size: 15.500px; color: #4c4c4c; white-space: nowrap; letter-spacing: .2px; }

.hscroll { height: 11px; margin: 0 1px 0 6px; background: #d6d6d6; border-radius: 6px; padding-left: 4px; }
.hthumb { width: 1035px; height: 11px; background: #808080; border-radius: 6px; }
```
